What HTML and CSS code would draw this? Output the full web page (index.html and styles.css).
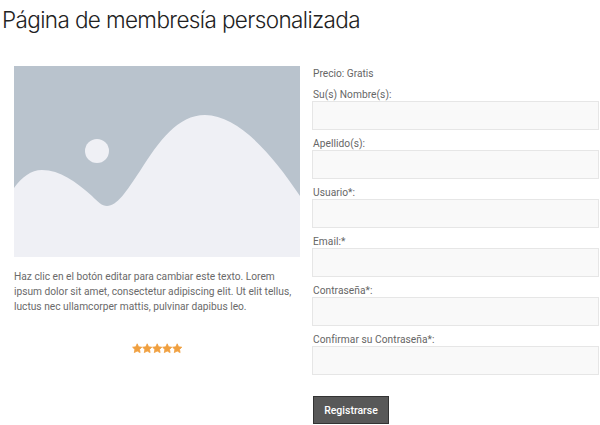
FILE: index.html
```html
<!DOCTYPE html>
<html lang="es">
<head>
    <meta charset="UTF-8">
    <meta name="viewport" content="width=device-width, initial-scale=1.0">
    <title>Página de membresía personalizada</title>
    <link rel="stylesheet" href="styles.css">
</head>
<body>
    <h1 class="page-title">Página de membresía personalizada</h1>

    <div class="columns">
        <div class="intro">
            <svg class="placeholder" viewBox="0 0 286 191" width="286" height="191">
                <rect width="286" height="191" fill="#b9c3cd"/>
                <circle cx="83" cy="85" r="12" fill="#eff0f5"/>
                <path fill="#eff0f5" d="M0 122C8 111 17 104 28 104C46 104 62 116 78 130C84 136 88 140 93 140C103 140 112 126 126 105C145 75 164 49 191 49C224 49 258 88 286 130V191H0Z"/>
            </svg>
            <p class="intro-text">Haz clic en el botón editar para cambiar este texto. Lorem<br>ipsum dolor sit amet, consectetur adipiscing elit. Ut elit tellus,<br>luctus nec ullamcorper mattis, pulvinar dapibus leo.</p>
            <svg class="stars" viewBox="0 0 51 11" width="51" height="11">
                <defs>
                    <polygon id="star" points="5.2,0.8 6.6,3.8 9.8,4.2 7.5,6.4 8.1,9.6 5.2,8 2.3,9.6 2.9,6.4 0.6,4.2 3.8,3.8"/>
                </defs>
                <g fill="#f0a040" stroke="#f0a040" stroke-width="0.8" stroke-linejoin="round">
                    <use href="#star"/>
                    <use href="#star" x="10"/>
                    <use href="#star" x="20"/>
                    <use href="#star" x="30"/>
                    <use href="#star" x="40"/>
                </g>
            </svg>
        </div>

        <form class="signup">
            <p class="price">Precio: Gratis</p>
            <div class="input-group">
                <label for="first_name">Su(s) Nombre(s):</label>
                <input type="text" id="first_name">
            </div>
            <div class="input-group">
                <label for="last_name">Apellido(s):</label>
                <input type="text" id="last_name">
            </div>
            <div class="input-group">
                <label for="username">Usuario*:</label>
                <input type="text" id="username">
            </div>
            <div class="input-group">
                <label for="email">Email:*</label>
                <input type="text" id="email">
            </div>
            <div class="input-group">
                <label for="password">Contraseña*:</label>
                <input type="password" id="password">
            </div>
            <div class="input-group">
                <label for="password2">Confirmar su Contraseña*:</label>
                <input type="password" id="password2">
            </div>
            <button type="button">Registrarse</button>
        </form>
    </div>
</body>
</html>
```
FILE: styles.css
```css
body {
    margin: 0;
    background: #fff;
    font-family: Roboto, sans-serif;
    overflow: hidden;
}
.page-title {
    margin: 0;
    padding: 6px 0 0 2px;
    height: 59px;
    box-sizing: border-box;
    font-family: Inter, sans-serif;
    font-size: 22.5px;
    line-height: 28px;
    font-weight: 300;
    letter-spacing: -0.62px;
    color: #222;
}
.columns {
    display: flex;
    gap: 12px;
    padding-left: 14px;
}
.intro {
    width: 286px;
    padding-top: 7px;
}
.placeholder {
    display: block;
}
.intro-text {
    margin: 12px 0 0;
    font-size: 10.2px;
    line-height: 15px;
    white-space: nowrap;
    color: #6a6a6a;
}
.stars {
    display: block;
    margin: 29px auto 0;
}
.signup {
    width: 287px;
    padding-top: 7px;
}
.price {
    margin: 0 0 0 1px;
    font-size: 10.2px;
    line-height: 15px;
    color: #666;
}
.input-group {
    margin-top: 6px;
}
.input-group label {
    display: block;
    margin-left: 1px;
    font-size: 10.2px;
    line-height: 15px;
    letter-spacing: 0.05px;
    color: #666;
}
.input-group input {
    display: block;
    box-sizing: border-box;
    width: 100%;
    height: 29px;
    margin-top: -1px;
    padding: 0 8px;
    background: #f9f9f9;
    border: 1px solid #e6e6e6;
}
button {
    display: block;
    box-sizing: border-box;
    width: 76px;
    height: 28px;
    margin: 21px 0 0 1px;
    padding: 0;
    border: 1px solid #333;
    background: #585858;
    color: #fff;
    font-family: Roboto, sans-serif;
    font-size: 10.5px;
    font-weight: 500;
}
```
